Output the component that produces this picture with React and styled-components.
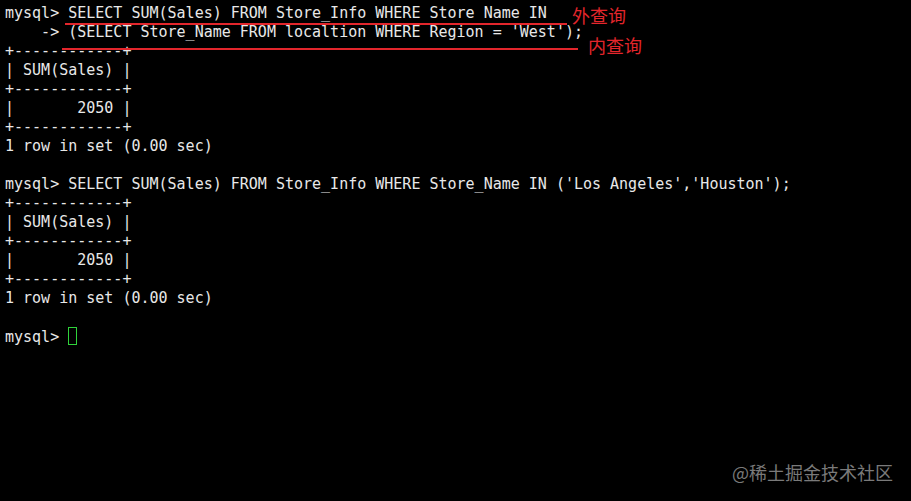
import React from 'react';
import styled, { createGlobalStyle } from 'styled-components';

const GlobalStyle = createGlobalStyle`
    html, body {
        margin: 0;
        padding: 0;
        background: #000;
    }
`;

const Screen = styled.div`
    position: relative;
    width: 911px;
    height: 501px;
    overflow: hidden;

    background-color: #000;
`;

const Terminal = styled.div`
    padding: 4px 0 0 5px;

    font-family: "DejaVu Sans Mono", "Liberation Mono", monospace;
    font-size: 15px;
    line-height: 19px;
    color: #e8e8e8;
`;

const Line = styled.div`
    height: 19px;
    white-space: pre;
`;

const Cursor = styled.span`
    display: inline-block;
    width: 7px;
    height: 16px;

    vertical-align: -3px;
    border: 1px solid #2fd33b;
`;

// red marks drawn over the screenshot
const Underline = styled.div`
    position: absolute;
    left: ${(p) => p.x}px;
    top: ${(p) => p.y}px;
    width: ${(p) => p.w}px;
    height: 2px;

    background-color: #e3262c;
`;

const Note = styled.div`
    position: absolute;
    left: ${(p) => p.x}px;
    top: ${(p) => p.y}px;

    font-family: "Noto Sans CJK SC", sans-serif;
    font-size: 18px;
    line-height: 20px;
    color: #e3262c;
`;

const Watermark = styled.div`
    position: absolute;
    right: 18px;
    bottom: 19px;

    font-family: "Noto Sans CJK SC", sans-serif;
    font-size: 18px;
    line-height: 20px;
    color: #7a7a7a;
`;

const lines = [
    "mysql> SELECT SUM(Sales) FROM Store_Info WHERE Store Name IN",
    "    -> (SELECT Store_Name FROM localtion WHERE Region = 'West');",
    "+------------+",
    "| SUM(Sales) |",
    "+------------+",
    "|       2050 |",
    "+------------+",
    "1 row in set (0.00 sec)",
    "",
    "mysql> SELECT SUM(Sales) FROM Store_Info WHERE Store_Name IN ('Los Angeles','Houston');",
    "+------------+",
    "| SUM(Sales) |",
    "+------------+",
    "|       2050 |",
    "+------------+",
    "1 row in set (0.00 sec)",
    "",
];

function App() {
    return (
        <Screen>
            <GlobalStyle />
            <Terminal>
                {lines.map((text, i) => (
                    <Line key={i}>{text}</Line>
                ))}
                <Line>mysql&gt; <Cursor /></Line>
            </Terminal>

            <Underline x={65} y={23} w={502} />
            <Underline x={62} y={48} w={516} />
            <Note x={572} y={5}>外查询</Note>
            <Note x={588} y={35}>内查询</Note>

            <Watermark>@稀土掘金技术社区</Watermark>
        </Screen>
    );
}

export default App;
